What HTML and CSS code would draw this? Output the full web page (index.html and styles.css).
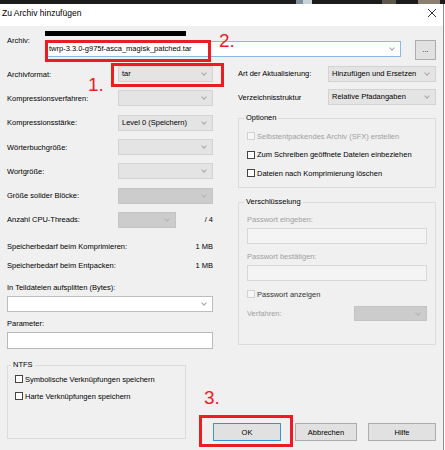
FILE: index.html
```html
<!DOCTYPE html>
<html lang="de">
<head>
    <meta charset="UTF-8">
    <meta name="viewport" content="width=device-width, initial-scale=1.0">
    <title>Zu Archiv hinzufügen</title>
    <link rel="stylesheet" href="styles.css">
</head>
<body>
    <div class="taskbar">
        <span class="tb-item tb-blue"></span>
        <span class="tb-item tb-light"></span>
        <span class="tb-item tb-brown"></span>
        <span class="tb-item tb-tan"></span>
    </div>
    <div class="dialog">
        <div class="titlebar">
            <span class="title">Zu Archiv hinzufügen</span>
            <svg class="close" width="8" height="8" viewBox="0 0 8 8">
                <path d="M0 0L8 8M8 0L0 8" stroke="#333" stroke-width="1"/>
            </svg>
        </div>
        <div class="content">
            <div class="archive-row">
                <span class="archive-label">Archiv:</span>
                <div class="path-hidden"></div>
                <div class="combo combo-white combo-focus archive-combo">twrp-3.3.0-g975f-asca_magisk_patched.tar</div>
                <button class="btn browse-btn">...</button>
            </div>

            <div class="main">
                <div class="left-col">
                    <div class="settings">
                        <span>Archivformat:</span>
                        <div class="combo">tar</div>
                        <span>Kompressionsverfahren:</span>
                        <div class="combo"></div>
                        <span>Kompressionsstärke:</span>
                        <div class="combo">Level 0 (Speichern)</div>
                        <span>Wörterbuchgröße:</span>
                        <div class="combo"></div>
                        <span>Wortgröße:</span>
                        <div class="combo"></div>
                        <span>Größe solider Blöcke:</span>
                        <div class="combo combo-off"></div>
                        <span>Anzahl CPU-Threads:</span>
                        <div class="threads">
                            <div class="combo combo-off threads-combo"></div>
                            <span>/ 4</span>
                        </div>
                    </div>
                    <div class="memory">
                        <span>Speicherbedarf beim Komprimieren:</span>
                        <span class="value">1 MB</span>
                        <span>Speicherbedarf beim Entpacken:</span>
                        <span class="value">1 MB</span>
                    </div>
                    <div class="field-label split-label">In Teildateien aufsplitten (Bytes):</div>
                    <div class="combo combo-white split-combo"></div>
                    <div class="field-label param-label">Parameter:</div>
                    <div class="textbox param-input"></div>
                </div>

                <div class="right-col">
                    <div class="update-grid">
                        <span>Art der Aktualisierung:</span>
                        <div class="combo">Hinzufügen und Ersetzen</div>
                        <span>Verzeichnisstruktur</span>
                        <div class="combo">Relative Pfadangaben</div>
                    </div>
                    <fieldset class="group options">
                        <legend>Optionen</legend>
                        <label class="check muted"><input type="checkbox" disabled>Selbstentpackendes Archiv (SFX) erstellen</label>
                        <label class="check"><input type="checkbox">Zum Schreiben geöffnete Dateien einbeziehen</label>
                        <label class="check"><input type="checkbox">Dateien nach Komprimierung löschen</label>
                    </fieldset>
                    <fieldset class="group encryption">
                        <legend>Verschlüsselung</legend>
                        <div class="field-label muted pw-label">Passwort eingeben:</div>
                        <div class="textbox textbox-off pw-input"></div>
                        <div class="field-label muted pw-label">Passwort bestätigen:</div>
                        <div class="textbox textbox-off pw-input2"></div>
                        <label class="check show-pw"><input type="checkbox" disabled>Passwort anzeigen</label>
                        <div class="method">
                            <span class="muted">Verfahren:</span>
                            <div class="combo combo-off method-combo"></div>
                        </div>
                    </fieldset>
                </div>
            </div>

            <div class="bottom">
                <fieldset class="group ntfs">
                    <legend>NTFS</legend>
                    <label class="check"><input type="checkbox">Symbolische Verknüpfungen speichern</label>
                    <label class="check"><input type="checkbox">Harte Verknüpfungen speichern</label>
                </fieldset>
                <div class="buttons">
                    <button class="btn btn-ok">OK</button>
                    <button class="btn btn-cancel">Abbrechen</button>
                    <button class="btn btn-help">Hilfe</button>
                </div>
            </div>
        </div>
    </div>

    <!-- red annotations drawn over the dialog -->
    <div class="mark mark-archive"></div>
    <div class="mark mark-format"></div>
    <div class="mark mark-ok"></div>
    <div class="step step-1">1.</div>
    <div class="step step-2">2.</div>
    <div class="step step-3">3.</div>
</body>
</html>
```

FILE: styles.css
```css
body {
    margin: 0;
    width: 445px;
    height: 450px;
    overflow: hidden;
    position: relative;
    background: #ffffff;
    font-family: "Liberation Sans", Arial, sans-serif;
    font-size: 7.5px;
    color: #000;
}
.taskbar {
    height: 4px;
    background: #1b1b1b;
    display: flex;
}
.tb-item {
    height: 4px;
}
.tb-blue {
    margin-left: 296px;
    width: 7px;
    background: #7f8fa0;
}
.tb-light {
    width: 9px;
    background: #c9d1d9;
}
.tb-brown {
    margin-left: 70px;
    width: 14px;
    background: #5d564b;
}
.tb-tan {
    margin-left: 22px;
    width: 22px;
    background: #8a7f70;
}
.dialog {
    width: 444px;
    height: 446px;
    box-sizing: border-box;
    border-right: 1px solid #8e8e8e;
    background: #f0f0f0;
}
.titlebar {
    height: 22px;
    box-sizing: border-box;
    padding: 4px 7px 0 2px;
    background: #ffffff;
    display: flex;
    justify-content: space-between;
    align-items: flex-start;
}
.title {
    font-size: 8.5px;
    line-height: 10px;
}
.close {
    margin-top: 1px;
}
.content {
    padding: 0 7px;
}

/* archive name row */
.archive-row {
    display: grid;
    grid-template-columns: 38px 356px 14px 21px;
    grid-template-rows: 15px 17px;
}
.archive-label {
    grid-column: 1;
    grid-row: 1 / 3;
    line-height: 9px;
    padding-top: 10px;
}
.path-hidden {
    grid-column: 2;
    grid-row: 1;
    align-self: end;
    width: 141px;
    height: 5px;
    margin-bottom: 5px;
    background: #000;
}
.archive-combo {
    grid-column: 2;
    grid-row: 2;
    height: 17px;
    line-height: 15px;
    padding-left: 5px;
}
.archive-combo::after {
    top: 5px;
}
.browse-btn {
    grid-column: 4;
    grid-row: 2;
    height: 20px;
    margin-top: -1px;
    padding: 0;
    line-height: 14px;
}

/* controls */
.combo {
    position: relative;
    height: 16px;
    box-sizing: border-box;
    background: #e4e4e4;
    border: 1px solid #d3d3d3;
    padding-left: 3px;
    line-height: 14px;
    white-space: nowrap;
    overflow: hidden;
}
.combo::after {
    content: "";
    position: absolute;
    right: 6px;
    top: 4px;
    width: 3px;
    height: 3px;
    border-right: 1px solid #a6a6a6;
    border-bottom: 1px solid #a6a6a6;
    transform: rotate(45deg);
}
.combo-off {
    background: #cccccc;
    border-color: #c4c4c4;
}
.combo-off::after {
    border-color: #b4b4b4;
}
.combo-white {
    background: #ffffff;
    border-color: #bdbdbd;
}
.combo-focus {
    border-color: #8cb8e4;
}
.textbox {
    height: 17px;
    box-sizing: border-box;
    background: #ffffff;
    border: 1px solid #b9b9b9;
}
.textbox-off {
    height: 16px;
    background: #f4f4f4;
    border-color: #d8d8d8;
}
.btn {
    box-sizing: border-box;
    background: #e1e1e1;
    border: 1px solid #adadad;
    font-family: inherit;
    font-size: 7.5px;
    color: #000;
}
.muted {
    color: #a0a0a0;
}

/* left column */
.main {
    margin-top: 4px;
    display: grid;
    grid-template-columns: 206px 198px;
    column-gap: 25px;
    height: 287px;
}
.settings {
    display: grid;
    grid-template-columns: 111px 95px;
    grid-auto-rows: 24.3px;
    align-items: center;
}
.threads {
    display: flex;
    justify-content: space-between;
    align-items: center;
}
.threads-combo {
    width: 58px;
}
.memory {
    margin-top: 5px;
    display: grid;
    grid-template-columns: 1fr auto;
    grid-auto-rows: 19px;
    align-items: center;
}
.value {
    text-align: right;
}
.field-label {
    line-height: 9px;
}
.split-label {
    margin-top: 8px;
}
.split-combo {
    margin-top: 4px;
}
.param-label {
    margin-top: 7px;
}
.param-input {
    margin-top: 4px;
}

/* right column */
.update-grid {
    display: grid;
    grid-template-columns: 90px 108px;
    grid-auto-rows: 23.5px;
    align-items: center;
}
.group {
    margin: 0;
    padding: 0 8px;
    border: 1px solid #dcdcdc;
    min-inline-size: 0;
}
.group legend {
    padding: 0 2px;
    margin-left: -3px;
    line-height: 10px;
}
.check {
    display: flex;
    align-items: center;
    white-space: nowrap;
}
.check input {
    appearance: none;
    width: 8px;
    height: 8px;
    margin: 0 2px 0 0;
    box-sizing: border-box;
    border: 1px solid #444444;
    background: #ffffff;
}
.check input:disabled {
    border-color: #d2d2d2;
    background: #f6f6f6;
}
.options {
    margin-top: 4px;
    padding-top: 4px;
    padding-bottom: 4px;
}
.options .check {
    height: 18.5px;
}
.encryption {
    margin-top: 9.5px;
    padding-bottom: 23px;
}
.pw-label {
    margin-top: 7.5px;
}
.pw-input {
    margin-top: 4.5px;
}
.pw-input2 {
    margin-top: 4px;
}
.show-pw {
    height: 9px;
    margin-top: 9px;
    color: #333;
}
.method {
    margin-top: 7.5px;
    height: 15px;
    display: flex;
    justify-content: space-between;
    align-items: center;
}
.method-combo {
    width: 73px;
    height: 15px;
}

/* bottom area */
.bottom {
    margin-top: 11px;
    display: flex;
    align-items: flex-start;
}
.ntfs {
    width: 179px;
    height: 79px;
    box-sizing: border-box;
    padding: 0.5px 7px 0 7px;
}
.ntfs legend {
    margin-left: -4px;
}
.ntfs .check {
    height: 17px;
}
.buttons {
    margin-top: 63px;
    margin-left: 27px;
    display: flex;
}
.buttons .btn {
    height: 18px;
    width: 68px;
    padding: 0;
}
.btn-ok {
    border-color: #3c8fdc;
}
.btn-cancel {
    margin-left: 14px;
    width: 62px !important;
}
.btn-help {
    margin-left: 11px;
}

/* annotations */
.mark {
    position: absolute;
    box-sizing: border-box;
    border: 3px solid #ed1c24;
}
.mark-archive {
    left: 45px;
    top: 40px;
    width: 166px;
    height: 22px;
}
.mark-format {
    left: 111px;
    top: 63px;
    width: 113px;
    height: 24px;
}
.mark-ok {
    left: 199px;
    top: 415px;
    width: 94px;
    height: 32px;
}
.step {
    position: absolute;
    font-size: 19px;
    line-height: 19px;
    color: #ed1c24;
}
.step-1 {
    left: 88px;
    top: 75px;
}
.step-2 {
    left: 219px;
    top: 31px;
}
.step-3 {
    left: 204px;
    top: 388px;
}
```
